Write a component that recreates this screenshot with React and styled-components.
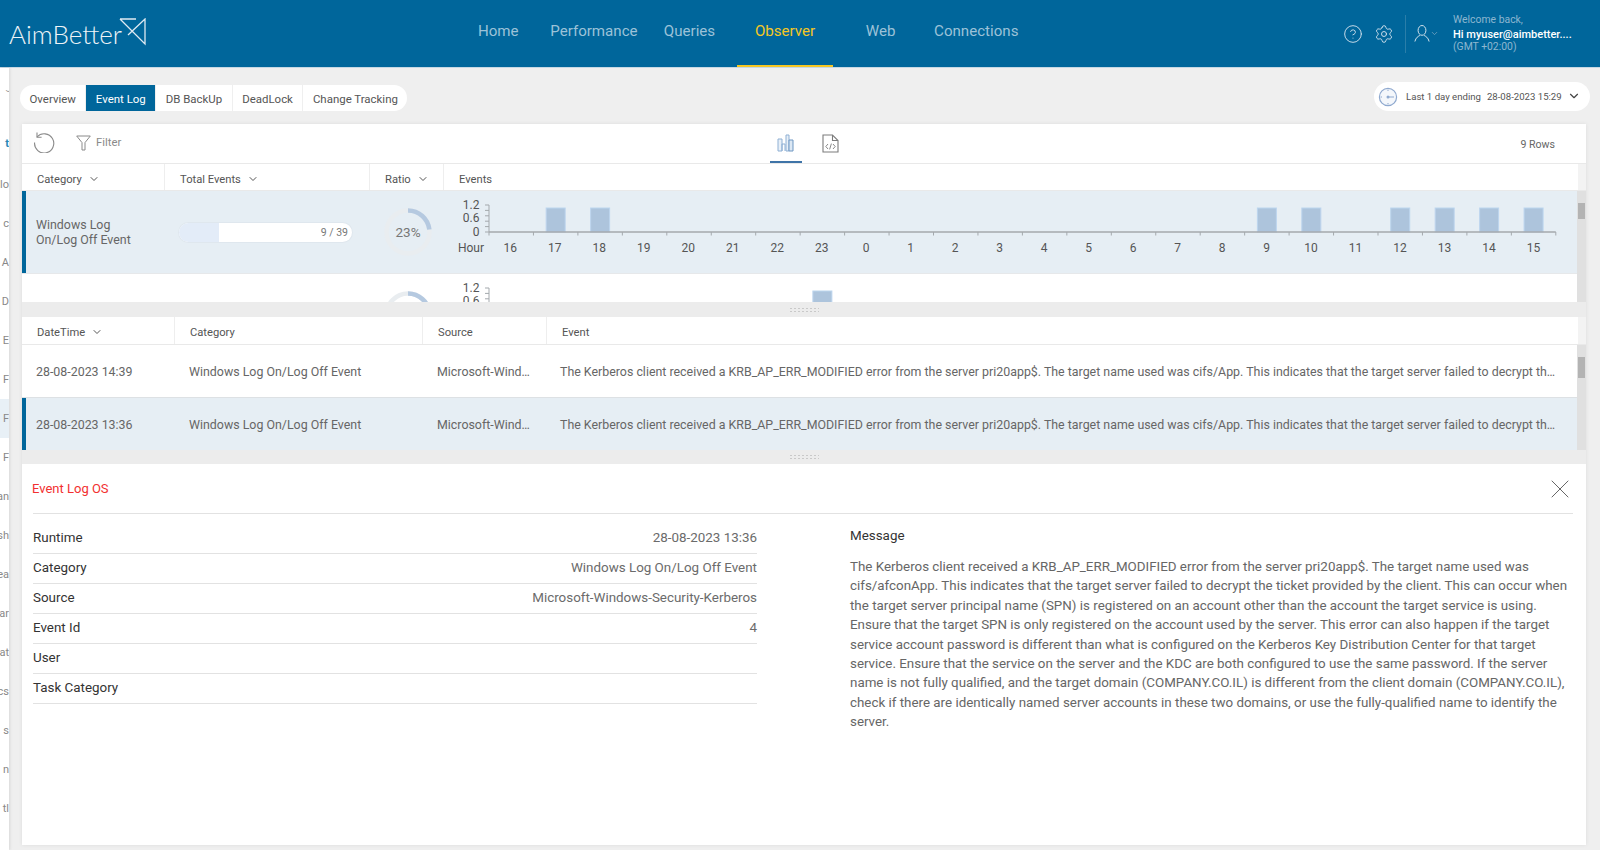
import styled, { createGlobalStyle } from 'styled-components';
import { ChevronDown, CircleHelp, Settings, X } from 'lucide-react';

const GlobalStyle = createGlobalStyle`
  html, body { margin: 0; padding: 0; height: 100%; overflow: hidden; }
  body { background: #efefef; font-family: Roboto, "Liberation Sans", sans-serif; color: #666; }
  * { box-sizing: border-box; }
`;

const NAV = ['Home', 'Performance', 'Queries', 'Observer', 'Web', 'Connections'];
const TABS = ['Overview', 'Event Log', 'DB BackUp', 'DeadLock', 'Change Tracking'];
const SIDE = ['lo', 'c', 'A', 'D', 'E', 'F', 'F', 'F', 'an', 'sh', 'ea', 'ar', 'at', 'cs', 's', 'n', 'tl'];
const HOURS = [16, 17, 18, 19, 20, 21, 22, 23, 0, 1, 2, 3, 4, 5, 6, 7, 8, 9, 10, 11, 12, 13, 14, 15];

const MESSAGE = 'The Kerberos client received a KRB_AP_ERR_MODIFIED error from the server pri20app$. The target name used was cifs/afconApp. This indicates that the target server failed to decrypt the ticket provided by the client. This can occur when the target server principal name (SPN) is registered on an account other than the account the target service is using. Ensure that the target SPN is only registered on the account used by the server. This error can also happen if the target service account password is different than what is configured on the Kerberos Key Distribution Center for that target service. Ensure that the service on the server and the KDC are both configured to use the same password. If the server name is not fully qualified, and the target domain (COMPANY.CO.IL) is different from the client domain (COMPANY.CO.IL), check if there are identically named server accounts in these two domains, or use the fully-qualified name to identify the server.';
const EVENT_SHORT = 'The Kerberos client received a KRB_AP_ERR_MODIFIED error from the server pri20app$. The target name used was cifs/App. This indicates that the target server failed to decrypt the ticket provided by the client.';

const CATEGORIES = [
  { label: 'Windows Log On/Log Off Event', count: 9, ratio: 23, bars: [17, 18, 9, 10, 12, 13, 14, 15], active: true },
  { label: '', count: 9, ratio: 23, bars: [23] },
];

const EVENTS = [
  { time: '28-08-2023 14:39', active: false },
  { time: '28-08-2023 13:36', active: true },
];

const DETAILS = [
  ['Runtime', '28-08-2023 13:36'],
  ['Category', 'Windows Log On/Log Off Event'],
  ['Source', 'Microsoft-Windows-Security-Kerberos'],
  ['Event Id', '4'],
  ['User', ''],
  ['Task Category', ''],
];

const Logo = () => (
  <LogoWrap>
    AimBetter
    <svg width="28" height="28" viewBox="0 0 28 28" fill="none" stroke="#dfeaf2" strokeWidth="1.3">
      <path d="M1 1 H17 M1 1 L26 26 V1 L9 17" />
    </svg>
  </LogoWrap>
);

const UserIcon = () => (
  <svg width="16" height="19" viewBox="0 0 18 20" fill="none" stroke="#d5e3ed" strokeWidth="1.1">
    <ellipse cx="9" cy="6.5" rx="4.4" ry="5.5" />
    <path d="M1 19 C2 14.5 5 13 6.6 12.2 M17 19 C16 14.5 13 13 11.4 12.2" />
  </svg>
);

const ClockIcon = () => (
  <svg width="20" height="20" viewBox="0 0 20 20" fill="#f4f7fb" stroke="#8fa9cf" strokeWidth="1.2">
    <circle cx="10" cy="10" r="8.6" />
    <path d="M10 10 H16" strokeWidth="1" />
    <circle cx="10" cy="10" r="0.9" fill="#8fa9cf" />
    <path d="M10 2.6 V4 M10 16 V17.4 M2.6 10 H4" strokeWidth="1" />
  </svg>
);

const RefreshIcon = () => (
  <svg width="22" height="22" viewBox="0 0 22 22" fill="none" stroke="#8a8a8a" strokeWidth="1.1">
    <path d="M4 6 A9.6 9.6 0 1 1 1.6 11.5" />
    <path d="M4 1.5 V6.2 H8.6" />
  </svg>
);

const FunnelIcon = () => (
  <svg width="15" height="16" viewBox="0 0 15 16" fill="none" stroke="#8a8a8a" strokeWidth="1">
    <path d="M0.7 1 H14.3 L9 7.6 V15 H6 V7.6 Z" />
  </svg>
);

const BarsIcon = () => (
  <svg width="17" height="18" viewBox="0 0 17 18" fill="#e8f0f8" stroke="#8fb0d4" strokeWidth="1">
    <path d="M1 17 V5 H5 V17 Z" />
    <path d="M5 17 V10 H8 V17" fill="none" />
    <path d="M9 17 V1 H12 V17 Z" />
    <path d="M12 17 V6 H16 V17 Z" fill="#dce8f4" stroke="#6f97c2" />
  </svg>
);

const CodeFileIcon = () => (
  <svg width="17" height="19" viewBox="0 0 17 19" fill="none" stroke="#7c7c7c" strokeWidth="1.1">
    <path d="M1 1 H10.5 L16 6.5 V18 H1 Z M10.5 1 V6.5 H16" />
    <path d="M6 10 L3.8 12.5 L6 15 M11 10 L13.2 12.5 L11 15 M9.4 9.6 L7.6 15.4" strokeWidth="0.9" />
  </svg>
);

const Donut = ({ ratio }) => {
  const r = 21.5;
  const len = 2 * Math.PI * r;
  return (
    <DonutWrap>
      <svg width="50" height="50" viewBox="0 0 50 50" fill="none" strokeWidth="4.5">
        <circle cx="25" cy="25" r={r} stroke="#e9edf0" />
        <circle
          cx="25"
          cy="25"
          r={r}
          stroke="#b5c9e0"
          strokeDasharray={`${(len * ratio) / 100} ${len}`}
          transform="rotate(-90 25 25)"
        />
      </svg>
      <DonutLabel>{ratio}%</DonutLabel>
    </DonutWrap>
  );
};

// hourly chart, origin is the left edge of the Events column
const HourChart = ({ bars }) => {
  const originX = 46;
  const baseY = 41;
  const step = 44.45;
  return (
    <svg width="1134" height="83" viewBox="0 0 1134 83">
      <g fontFamily="Roboto, sans-serif" fontSize="12" fill="#555">
        <text x="36.5" y="18" textAnchor="end">1.2</text>
        <text x="36.5" y="31" textAnchor="end">0.6</text>
        <text x="36.5" y="45" textAnchor="end">0</text>
        <text x="41" y="61" textAnchor="end">Hour</text>
        {HOURS.map((h, i) => (
          <text key={h} x={originX + step * (i + 0.5) - 1 + i * 0.04} y="61" textAnchor="middle">{h}</text>
        ))}
      </g>
      {bars.map(h => (
        <rect
          key={h}
          x={originX + step * (HOURS.indexOf(h) + 0.5) - 9.5}
          y="17"
          width="19"
          height={baseY - 17}
          fill="#adc4dc"
          stroke="#bcd5ee"
        />
      ))}
      <g stroke="#a4a9ad" fill="none">
        <path d={`M${originX} 14 V${baseY}`} />
        {[14, 19.4, 24.8, 30.2, 35.6, 41].map(y => (
          <path key={y} d={`M${originX - 4} ${y} H${originX}`} />
        ))}
        <path d={`M${originX} ${baseY} H${originX + step * 24}`} strokeWidth="1.5" />
        {HOURS.map((h, i) => (
          <path key={h} d={`M${originX + step * i} ${baseY} v3.5`} />
        ))}
        <path d={`M${originX + step * 24} ${baseY} v3.5`} />
      </g>
    </svg>
  );
};

const App = () => {
  return (
    <>
      <GlobalStyle />
      <TopBar>
        <Logo />
        <Nav>
          {NAV.map(item => (
            <NavItem key={item} $active={item === 'Observer'}>{item}</NavItem>
          ))}
        </Nav>
        <UserArea>
          <IconSlot><CircleHelp size={20} strokeWidth={1.1} /></IconSlot>
          <IconSlot><Settings size={20} strokeWidth={1.1} /></IconSlot>
          <Divider />
          <UserIcon />
          <ChevronDown size={9} color="#7fa9c4" />
          <UserText>
            <Muted>Welcome back,</Muted>
            <UserName>Hi myuser@aimbetter....</UserName>
            <Muted>(GMT +02:00)</Muted>
          </UserText>
        </UserArea>
      </TopBar>

      <Body>
        <Sidebar>
          <SideArrow>›</SideArrow>
          <SideLink>t</SideLink>
          {SIDE.map((s, i) => (
            <SideItem key={i} $active={i === 6}>{s}</SideItem>
          ))}
        </Sidebar>

        <Main>
          <TopRow>
            <Tabs>
              {TABS.map(tab => (
                <Tab key={tab} $active={tab === 'Event Log'}>{tab}</Tab>
              ))}
            </Tabs>
            <DatePill>
              <ClockIcon />
              <span>Last 1 day ending</span>
              <span>28-08-2023 15:29</span>
              <ChevronDown size={14} color="#444" />
            </DatePill>
          </TopRow>

          <Panel>
            <Toolbar>
              <ToolLeft>
                <RefreshIcon />
                <FilterBtn><FunnelIcon /> Filter</FilterBtn>
              </ToolLeft>
              <ViewTabs>
                <ViewTab $active><BarsIcon /></ViewTab>
                <ViewTab><CodeFileIcon /></ViewTab>
              </ViewTabs>
              <RowsCount>9 Rows</RowsCount>
            </Toolbar>

            <TableHead $cols="143px 205px 74px 1fr" $height={27} $pad={4}>
              <HeadCell>Category <ChevronDown size={12} /></HeadCell>
              <HeadCell>Total Events <ChevronDown size={12} /></HeadCell>
              <HeadCell>Ratio <ChevronDown size={12} /></HeadCell>
              <HeadCell>Events</HeadCell>
            </TableHead>

            <Pane $height={111}>
              <PaneScroll>
                {CATEGORIES.map((c, i) => (
                  <CategoryRow key={i} $active={c.active}>
                    <CategoryLabel>{c.label}</CategoryLabel>
                    <ProgressCell>
                      <Progress>
                        <ProgressFill style={{ width: `${c.ratio}%` }} />
                        <ProgressText>{c.count} / 39</ProgressText>
                      </Progress>
                    </ProgressCell>
                    <Donut ratio={c.ratio} />
                    <HourChart bars={c.bars} />
                  </CategoryRow>
                ))}
              </PaneScroll>
              <ScrollTrack><ScrollThumb $top={12} $height={16} /></ScrollTrack>
            </Pane>

            <Splitter $height={15}><Grip /></Splitter>

            <TableHead $cols="153px 248px 124px 1fr" $height={28} $pad={3}>
              <HeadCell>DateTime <ChevronDown size={12} /></HeadCell>
              <HeadCell>Category</HeadCell>
              <HeadCell>Source</HeadCell>
              <HeadCell>Event</HeadCell>
            </TableHead>

            <Pane $height={105}>
              <PaneScroll>
                {EVENTS.map(e => (
                  <EventRow key={e.time} $active={e.active}>
                    <EventCell>{e.time}</EventCell>
                    <EventCell>Windows Log On/Log Off Event</EventCell>
                    <EventCell>Microsoft-Windows-Security-Kerberos</EventCell>
                    <EventCell>{EVENT_SHORT}</EventCell>
                  </EventRow>
                ))}
              </PaneScroll>
              <ScrollTrack><ScrollThumb $top={12} $height={21} /></ScrollTrack>
            </Pane>

            <Splitter $height={14}><Grip /></Splitter>

            <Details>
              <DetailsHead>
                <DetailsTitle>Event Log OS</DetailsTitle>
                <X size={32} strokeWidth={0.75} color="#666" />
              </DetailsHead>
              <DetailsBody>
                <DetailsList>
                  {DETAILS.map(([k, v]) => (
                    <DetailRow key={k}>
                      <DetailKey>{k}</DetailKey>
                      <DetailValue>{v}</DetailValue>
                    </DetailRow>
                  ))}
                </DetailsList>
                <MessageBox>
                  <DetailKey>Message</DetailKey>
                  <MessageText>{MESSAGE}</MessageText>
                </MessageBox>
              </DetailsBody>
            </Details>
          </Panel>
        </Main>
      </Body>
    </>
  );
};

const TopBar = styled.header`
  display: flex;
  align-items: stretch;
  height: 68px;
  background: #00669b;
  border-bottom: 1px solid #c6d8e4;
`;

const LogoWrap = styled.div`
  display: flex;
  align-items: flex-start;
  width: 450.5px;
  padding: 18px 0 0 9px;
  font-family: Lato, sans-serif;
  font-weight: 300;
  font-size: 26px;
  line-height: 32px;
  color: #eef4f8;
  svg { margin: 0 0 0 -3px; }
`;

const Nav = styled.nav`
  display: grid;
  grid-template-columns: repeat(6, 95.6px);
`;

const NavItem = styled.div`
  display: flex;
  justify-content: center;
  padding-top: 22px;
  font-size: 15.1px;
  line-height: 19px;
  color: ${p => (p.$active ? '#f5c723' : '#9cc2d8')};
  box-shadow: ${p => (p.$active ? 'inset 0 -2px 0 #f5c723' : 'none')};
`;

const UserArea = styled.div`
  display: flex;
  align-items: center;
  margin-left: auto;
  width: 263px;
  color: #d5e3ed;
`;

const IconSlot = styled.div`
  display: flex;
  width: 31px;
  justify-content: center;
`;

const Divider = styled.div`
  width: 1px;
  height: 38px;
  margin: 0 8px 0 6px;
  background: #2a7ea9;
`;

const UserText = styled.div`
  display: flex;
  flex-direction: column;
  margin-left: 14px;
  padding-bottom: 1px;
  font-size: 10.4px;
  line-height: 13px;
`;

const Muted = styled.span`
  color: #8db7d0;
`;

const UserName = styled.span`
  margin: 2px 0 -1px;
  color: #fff;
  font-weight: 500;
  font-size: 11px;
`;

const Body = styled.div`
  display: flex;
  height: 782px;
`;

const Sidebar = styled.aside`
  flex: none;
  width: 9px;
  height: 100%;
  background: #fff;
  box-shadow: 1px 0 3px rgba(0, 0, 0, 0.1);
  overflow: hidden;
  padding-top: 11px;
  font-size: 11px;
  color: #888;
`;

const SideArrow = styled.div`
  height: 18px;
  text-align: right;
  transform: rotate(90deg);
  font-size: 10px;
`;

const SideLink = styled.div`
  margin-top: 37px;
  height: 20px;
  line-height: 20px;
  text-align: right;
  color: #2a86b5;
  font-weight: 700;
`;

const SideItem = styled.div`
  display: flex;
  justify-content: flex-end;
  align-items: center;
  height: 39px;
  background: ${p => (p.$active ? '#e8f0f6' : 'transparent')};
  &:nth-child(3) { margin-top: 11px; }
`;

const Main = styled.main`
  flex: 1;
  min-width: 0;
  padding: 14px 10px 0 11px;
`;

const TopRow = styled.div`
  display: flex;
  justify-content: space-between;
  align-items: flex-start;
  height: 42px;
  padding-top: 3px;
`;

const Tabs = styled.div`
  display: flex;
  gap: 1px;
  height: 26px;
  border-radius: 13px;
  overflow: hidden;
`;

const Tab = styled.div`
  display: flex;
  align-items: center;
  padding: 1px 9.5px 0;
  background: ${p => (p.$active ? '#00669b' : '#fff')};
  color: ${p => (p.$active ? '#fff' : '#555')};
  font-size: 11.45px;
`;

const DatePill = styled.div`
  display: flex;
  align-items: center;
  gap: 6px;
  width: 216px;
  height: 29px;
  margin-top: -3px;
  padding: 0 0 0 4px;
  background: #fff;
  border-radius: 15px;
  font-size: 9.6px;
  color: #555;
  white-space: nowrap;
  svg:first-child { margin-right: 2px; }
  svg:last-child { margin-left: -1px; margin-top: -2px; }
`;

const Panel = styled.section`
  display: flex;
  flex-direction: column;
  height: 721px;
  margin-left: 2px;
  margin-right: 4px;
  background: #fff;
  box-shadow: 0 0 4px rgba(0, 0, 0, 0.08);
`;

const Toolbar = styled.div`
  display: grid;
  grid-template-columns: 1fr auto 1fr;
  align-items: stretch;
  flex: none;
  height: 40px;
  border-bottom: 1px solid #e9e9e9;
`;

const ToolLeft = styled.div`
  display: flex;
  align-items: center;
  gap: 21px;
  padding: 0 0 3px 11px;
`;

const FilterBtn = styled.div`
  display: flex;
  align-items: center;
  gap: 5px;
  padding-top: 1px;
  font-size: 11.3px;
  color: #8a8a8a;
`;

const ViewTabs = styled.div`
  display: flex;
  gap: 13px;
  margin-left: 8px;
`;

const ViewTab = styled.div`
  display: flex;
  align-items: center;
  justify-content: center;
  width: 32px;
  padding-top: 1px;
  border-bottom: 2px solid ${p => (p.$active ? '#3f74a8' : 'transparent')};
`;

const RowsCount = styled.div`
  display: flex;
  align-items: center;
  justify-content: flex-end;
  padding: 1px 31px 0 0;
  font-size: 10.6px;
  color: #666;
`;

const TableHead = styled.div`
  display: grid;
  flex: none;
  grid-template-columns: ${p => p.$cols};
  height: ${p => p.$height}px;
  padding-right: 9px;
  border-bottom: 1px solid #e9e9e9;
  background: linear-gradient(to left, #f3f3f3 8px, #fff 8px);
  > div { padding-top: ${p => p.$pad}px; }
`;

const HeadCell = styled.div`
  display: flex;
  align-items: center;
  gap: 6px;
  padding-left: 15px;
  font-size: 11.2px;
  color: #555;
  background: #fff;
  border-right: 1px solid #eee;
  &:last-child { border-right: none; }
`;

const Pane = styled.div`
  display: flex;
  flex: none;
  height: ${p => p.$height}px;
  overflow: hidden;
`;

const PaneScroll = styled.div`
  flex: 1;
  min-width: 0;
`;

const ScrollTrack = styled.div`
  position: relative;
  flex: none;
  width: 9px;
  background: #e0e0e0;
`;

const ScrollThumb = styled.div`
  position: absolute;
  top: ${p => p.$top}px;
  left: 1px;
  right: 1px;
  height: ${p => p.$height}px;
  background: #b3b3b3;
`;

const CategoryRow = styled.div`
  display: grid;
  grid-template-columns: 142px 205px 74px 1fr;
  align-items: start;
  height: 83px;
  background: ${p => (p.$active ? '#e6eef4' : '#fff')};
  box-shadow: ${p => (p.$active ? 'inset 4px 0 0 #00669b' : 'none')};
  border-bottom: 1px solid #e6e8ea;
`;

const CategoryLabel = styled.div`
  padding: 26px 20px 0 14px;
  font-size: 12.4px;
  line-height: 15px;
  color: #666;
`;

const ProgressCell = styled.div`
  padding: 32px 17px 0 15px;
`;

const Progress = styled.div`
  position: relative;
  height: 19px;
  background: #fff;
  border-radius: 10px;
  box-shadow: 0 0 0 1px #dfe7ee;
  overflow: hidden;
`;

const ProgressFill = styled.div`
  height: 100%;
  background: #e3ecf8;
`;

const ProgressText = styled.span`
  position: absolute;
  right: 4px;
  top: 0;
  font-size: 10.5px;
  line-height: 19px;
  color: #777;
`;

const DonutWrap = styled.div`
  position: relative;
  display: flex;
  justify-content: center;
  padding-top: 16px;
  width: 50px;
  margin-left: 14px;
`;

const DonutLabel = styled.span`
  position: absolute;
  top: 33px;
  left: 0;
  right: 0;
  text-align: center;
  font-size: 13.5px;
  line-height: 16px;
  color: #777;
`;

const Splitter = styled.div`
  display: flex;
  align-items: center;
  justify-content: center;
  flex: none;
  height: ${p => p.$height}px;
  background: #ececec;
`;

const Grip = styled.div`
  width: 30px;
  height: 6px;
  background-image: radial-gradient(#c9c9c9 0.9px, transparent 1px);
  background-size: 4px 3px;
`;

const EventRow = styled.div`
  display: grid;
  grid-template-columns: 153px 248px 124px minmax(0, 1fr);
  align-items: center;
  height: 53px;
  background: ${p => (p.$active ? '#e6eef4' : '#fff')};
  box-shadow: ${p => (p.$active ? 'inset 4px 0 0 #00669b' : 'none')};
  border-bottom: ${p => (p.$active ? 'none' : '1px solid #dde1e4')};
`;

const EventCell = styled.div`
  padding: 0 20px 0 14px;
  font-size: 12.4px;
  color: #666;
  white-space: nowrap;
  overflow: hidden;
  text-overflow: ellipsis;
  &:nth-child(3) { padding-right: 14px; }
  &:nth-child(4) { padding-left: 13px; }
`;

const Details = styled.div`
  flex: 1;
  min-height: 0;
  display: flex;
  flex-direction: column;
  padding: 0 13px 0 11px;
`;

const DetailsHead = styled.div`
  display: flex;
  align-items: center;
  justify-content: space-between;
  flex: none;
  height: 50px;
  border-bottom: 1px solid #e2e2e2;
  svg { margin-right: -3px; }
`;

const DetailsTitle = styled.h2`
  margin: 0 0 1px -1px;
  font-size: 13px;
  font-weight: 400;
  color: #f23030;
`;

const DetailsBody = styled.div`
  display: grid;
  grid-template-columns: 724px 1fr;
  column-gap: 93px;
  padding-top: 10px;
`;

const DetailsList = styled.div`
  display: flex;
  flex-direction: column;
`;

const DetailRow = styled.div`
  display: flex;
  justify-content: space-between;
  align-items: center;
  height: 30px;
  padding-bottom: 2px;
  border-bottom: 1px solid #e2e2e2;
`;

const DetailKey = styled.span`
  font-size: 13.4px;
  color: #333;
`;

const DetailValue = styled.span`
  font-size: 13.4px;
  color: #6b6b6b;
`;

const MessageBox = styled.div`
  padding-top: 1px;
`;

const MessageText = styled.p`
  margin: 13px 0 0;
  font-size: 13.37px;
  line-height: 19.4px;
  color: #666;
`;

export default App;
